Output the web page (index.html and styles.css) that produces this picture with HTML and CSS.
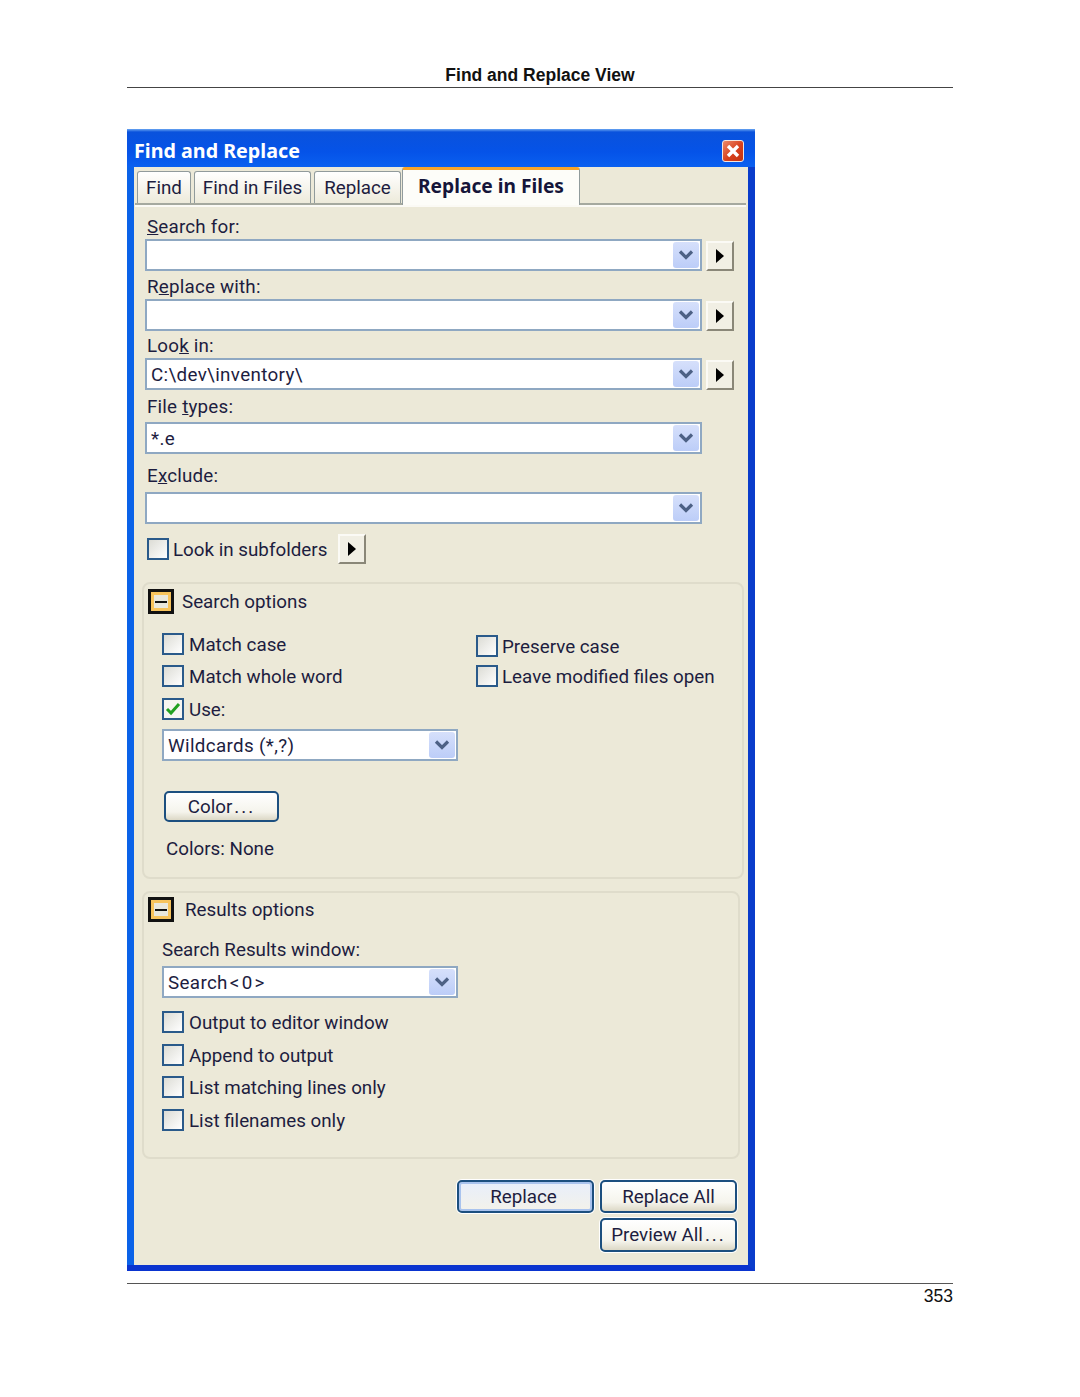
FILE: index.html
```html
<!DOCTYPE html>
<html lang="en">
<head>
    <meta charset="UTF-8">
    <title>Find and Replace View</title>
    <link rel="stylesheet" href="styles.css">
</head>
<body>
    <svg class="defs" width="0" height="0" aria-hidden="true">
        <symbol id="chev" viewBox="0 0 16 12">
            <path d="M2 2.5 L8 8.5 L14 2.5" fill="none" stroke="#4d6185" stroke-width="3.2"/>
        </symbol>
        <symbol id="tri" viewBox="0 0 8 14">
            <path d="M0 0 L8 7 L0 14 Z" fill="#000"/>
        </symbol>
        <symbol id="tick" viewBox="0 0 16 14">
            <path d="M2 7 L6 11 L14 2" fill="none" stroke="#21a121" stroke-width="3"/>
        </symbol>
    </svg>

    <div class="page">
        <header class="page-head">Find and Replace View</header>

        <div class="window">
            <div class="titlebar">
                <span class="title">Find and Replace</span>
                <span class="close">
                    <svg width="14" height="14" viewBox="0 0 14 14"><path d="M2 2 L12 12 M12 2 L2 12" stroke="#fff" stroke-width="3.4"/></svg>
                </span>
            </div>

            <div class="tabs">
                <div class="tab tab-find">Find</div>
                <div class="tab tab-files">Find in Files</div>
                <div class="tab tab-replace">Replace</div>
                <div class="tab tab-active">Replace in Files</div>
            </div>

            <div class="panel">
                <div class="fields">
                    <div class="label"><u>S</u>earch for:</div>
                    <div class="field-row">
                        <div class="combo combo-wide"><span class="combo-text"></span><span class="drop"><svg width="16" height="12"><use href="#chev"/></svg></span></div>
                        <div class="arrow"><svg width="8" height="14"><use href="#tri"/></svg></div>
                    </div>
                    <div class="label label-replace">R<u>e</u>place with:</div>
                    <div class="field-row">
                        <div class="combo combo-wide"><span class="combo-text"></span><span class="drop"><svg width="16" height="12"><use href="#chev"/></svg></span></div>
                        <div class="arrow"><svg width="8" height="14"><use href="#tri"/></svg></div>
                    </div>
                    <div class="label label-look">Loo<u>k</u> in:</div>
                    <div class="field-row">
                        <div class="combo combo-wide"><span class="combo-text">C:\dev\inventory\</span><span class="drop"><svg width="16" height="12"><use href="#chev"/></svg></span></div>
                        <div class="arrow"><svg width="8" height="14"><use href="#tri"/></svg></div>
                    </div>
                    <div class="label label-types">File <u>t</u>ypes:</div>
                    <div class="combo combo-wide"><span class="combo-text">*.e</span><span class="drop"><svg width="16" height="12"><use href="#chev"/></svg></span></div>
                    <div class="label label-exclude">E<u>x</u>clude:</div>
                    <div class="combo combo-wide"><span class="combo-text"></span><span class="drop"><svg width="16" height="12"><use href="#chev"/></svg></span></div>
                    <div class="subfolders">
                        <label class="check check-tight"><span class="box"></span>Look in subfolders</label>
                        <div class="arrow"><svg width="8" height="14"><use href="#tri"/></svg></div>
                    </div>
                </div>

                <section class="group group-search">
                    <div class="group-head"><span class="toggle"><span class="minus"></span></span><span class="group-title">Search options</span></div>
                    <div class="opts">
                        <div class="opt-col opt-left">
                            <label class="check"><span class="box"></span>Match case</label>
                            <label class="check gap-10"><span class="box"></span>Match whole word</label>
                            <label class="check gap-11"><span class="box box-on"><svg width="16" height="14"><use href="#tick"/></svg></span>Use:</label>
                        </div>
                        <div class="opt-col opt-right">
                            <label class="check check-tight"><span class="box"></span>Preserve case</label>
                            <label class="check check-tight gap-8"><span class="box"></span>Leave modified files open</label>
                        </div>
                    </div>
                    <div class="combo combo-short combo-use"><span class="combo-text">Wildcards (*,?)</span><span class="drop"><svg width="16" height="12"><use href="#chev"/></svg></span></div>
                    <div class="btn btn-color">Color<span class="dots">...</span></div>
                    <div class="colors">Colors: None</div>
                </section>

                <section class="group group-results">
                    <div class="group-head"><span class="toggle"><span class="minus"></span></span><span class="group-title title-results">Results options</span></div>
                    <div class="results-label">Search Results window:</div>
                    <div class="combo combo-short combo-results"><span class="combo-text">Search<span class="angle">&lt;</span>0<span class="angle">&gt;</span></span><span class="drop"><svg width="16" height="12"><use href="#chev"/></svg></span></div>
                    <div class="result-checks">
                        <label class="check"><span class="box"></span>Output to editor window</label>
                        <label class="check gap-11"><span class="box"></span>Append to output</label>
                        <label class="check gap-10"><span class="box"></span>List matching lines only</label>
                        <label class="check gap-11"><span class="box"></span>List filenames only</label>
                    </div>
                </section>

                <div class="actions">
                    <div class="action-row">
                        <div class="btn btn-action btn-default">Replace</div>
                        <div class="btn btn-action">Replace All</div>
                    </div>
                    <div class="action-row action-row-2">
                        <div class="btn btn-action">Preview All<span class="dots">...</span></div>
                    </div>
                </div>
            </div>
        </div>

        <footer class="page-foot">353</footer>
    </div>
</body>
</html>
```

FILE: styles.css
```css
body {
    margin: 0;
    background-color: #fff;
    font-family: Roboto, "Noto Sans", sans-serif;
    font-size: 18.8px;
    color: #1d1d3f;
}

.defs {
    position: absolute;
}

.page {
    width: 826px;
    margin-left: 127px;
}

.page-head {
    height: 24px;
    padding-top: 63px;
    line-height: 24px;
    text-align: center;
    font-family: "Liberation Sans", sans-serif;
    font-size: 17.5px;
    font-weight: bold;
    color: #111;
    border-bottom: 1px solid #444;
}

.page-foot {
    margin-top: 12px;
    padding-top: 1px;
    line-height: 22px;
    text-align: right;
    font-family: "Liberation Sans", sans-serif;
    font-size: 17.5px;
    color: #111;
    border-top: 1px solid #555;
}

/* window frame */
.window {
    width: 628px;
    height: 1142px;
    margin-top: 41px;
    box-sizing: border-box;
    display: flex;
    flex-direction: column;
    background-color: #0a62e8;
    border-right: 7px solid #0a3ccb;
    border-bottom: 6px solid #0a34cf;
}

.titlebar {
    height: 38px;
    flex: none;
    display: flex;
    align-items: center;
    justify-content: space-between;
    margin-right: -7px;
    padding: 0 11px 0 7px;
    background: linear-gradient(#6aa6f2 0, #0a52dc 3px, #0553e8 60%, #0a60f0 100%);
}

.title {
    padding-top: 4px;
    font-family: "Noto Sans", sans-serif;
    font-weight: bold;
    font-size: 19.7px;
    color: #fff;
}

.close {
    width: 22px;
    height: 22px;
    box-sizing: border-box;
    margin-top: 5px;
    display: flex;
    align-items: center;
    justify-content: center;
    background: linear-gradient(135deg, #ec8a6a, #d8401c 55%, #c23310);
    border: 1px solid #f2e6e0;
    border-radius: 3px;
}

.tabs {
    height: 38px;
    flex: none;
    display: flex;
    align-items: flex-end;
    margin-left: 7px;
    padding-left: 3px;
    background-color: #ece9d8;
}

.tab {
    height: 34px;
    box-sizing: border-box;
    line-height: 33px;
    text-align: center;
    background: linear-gradient(#fff, #ece9d8);
    border: 1px solid #919b9c;
    border-bottom: none;
    border-radius: 3px 3px 0 0;
    white-space: nowrap;
}

.tab-find { width: 54px; }
.tab-files { width: 117px; margin-left: 3px; }
.tab-replace { width: 87px; margin-left: 3px; }

.tab-active {
    width: 178px;
    height: 38px;
    margin-left: 1px;
    line-height: 31px;
    font-family: "Noto Sans", sans-serif;
    font-weight: bold;
    font-size: 19.2px;
    color: #15153a;
    background-color: #fdfdf9;
    background-image: none;
    border-top: 3px solid #f7a428;
    position: relative;
    z-index: 1;
}

.panel {
    flex: 1;
    margin-left: 7px;
    background-color: #ece9d8;
}

.panel::before {
    content: "";
    display: block;
    height: 2px;
    margin: -2px 2px 0 1px;
    background-color: #a5a99f;
    border-bottom: 2px solid #fbfaf5;
}

.fields {
    padding: 6px 0 0 11px;
}

.label {
    height: 26px;
    padding-left: 2px;
    line-height: 28px;
    letter-spacing: 0.2px;
}

.label-replace { margin-top: 2px; }
.label-look { margin-top: 1px; }
.label-types { margin-top: 3px; margin-bottom: 3px; }
.label-exclude { margin-top: 8px; margin-bottom: 4px; }

.field-row {
    display: flex;
    align-items: flex-end;
    gap: 4px;
}

.combo {
    height: 32px;
    box-sizing: border-box;
    display: flex;
    align-items: center;
    justify-content: space-between;
    background-color: #fff;
    border: 2px solid #8fa8c2;
    padding-left: 4px;
    flex: none;
}

.combo-wide { width: 557px; }
.combo-short { width: 296px; }

.combo-text {
    padding-top: 2px;
    line-height: 28px;
    letter-spacing: 0.35px;
    white-space: nowrap;
}

.angle {
    margin: 0 2px;
}

.drop {
    width: 26px;
    height: 26px;
    margin-right: 1px;
    display: flex;
    align-items: center;
    justify-content: center;
    background: linear-gradient(#d6e0fb, #bccdf8);
    border-radius: 3px;
}

.arrow {
    width: 28px;
    height: 30px;
    box-sizing: border-box;
    flex: none;
    display: flex;
    align-items: center;
    justify-content: center;
    background-color: #f1efe4;
    border: 2px solid;
    border-color: #fbfaf5 #8a8778 #8a8778 #fbfaf5;
}

.subfolders {
    width: 219px;
    height: 30px;
    margin: 10px 0 0 2px;
    display: flex;
    align-items: center;
    justify-content: space-between;
}

.check {
    height: 22px;
    display: flex;
    align-items: flex-start;
    gap: 5px;
    line-height: 24px;
    white-space: nowrap;
}

.check-tight { gap: 4px; }

.box {
    width: 22px;
    height: 22px;
    box-sizing: border-box;
    flex: none;
    display: flex;
    align-items: center;
    justify-content: center;
    background: linear-gradient(135deg, #dcdcd5, #fff);
    border: 2px solid #2a5a8a;
}

.box-on {
    background: #f6f6f1;
}

/* collapsible groups */
.group {
    box-sizing: border-box;
    margin-left: 8px;
    border: 2px solid #dfdccb;
    border-radius: 8px;
}

.group-search {
    width: 602px;
    height: 297px;
    margin-top: 18px;
}

.group-results {
    width: 598px;
    height: 268px;
    margin-top: 12px;
}

.group-head {
    display: flex;
    align-items: center;
    gap: 8px;
    margin: 5px 0 0 4px;
}

.group-results .group-head {
    margin-top: 4px;
}

.title-results {
    margin-left: 3px;
}

.toggle {
    width: 26px;
    height: 25px;
    box-sizing: border-box;
    display: flex;
    align-items: center;
    justify-content: center;
    background-color: #e9e7dc;
    border: 3px solid #111;
    box-shadow: inset 0 0 0 3px #f7c35c;
}

.minus {
    width: 12px;
    height: 2px;
    background-color: #111;
}

.opts {
    display: flex;
    margin: 19px 0 0 18px;
}

.opt-col {
    display: flex;
    flex-direction: column;
}

.opt-left { width: 314px; }
.opt-right { padding-top: 2px; }

.gap-8 { margin-top: 8px; }
.gap-10 { margin-top: 10px; }
.gap-11 { margin-top: 11px; }

.combo-use { margin: 9px 0 0 18px; }

.btn {
    box-sizing: border-box;
    display: flex;
    align-items: center;
    justify-content: center;
    background: linear-gradient(#fff, #f5f4ec 70%, #dcd8c6);
    border: 2px solid #1c4f7f;
    border-radius: 5px;
    white-space: nowrap;
}

.dots {
    margin-left: 2px;
    letter-spacing: 2px;
}

.btn-color {
    width: 115px;
    height: 31px;
    margin: 30px 0 0 20px;
}

.colors {
    height: 26px;
    line-height: 28px;
    margin: 13px 0 0 22px;
}

.results-label {
    height: 26px;
    line-height: 28px;
    margin: 14px 0 4px 18px;
}

.combo-results { margin-left: 18px; }

.result-checks {
    margin: 13px 0 0 18px;
}

.actions {
    margin-top: 21px;
    padding-right: 11px;
}

.action-row {
    display: flex;
    justify-content: flex-end;
    gap: 6px;
}

.action-row-2 { margin-top: 5px; }

.btn-action {
    width: 137px;
    height: 33px;
    box-shadow: 0 0 0 1px #fff;
}

.action-row-2 .btn-action { height: 34px; }

.btn-default {
    padding-right: 4px;
    background: linear-gradient(#e8eefb, #f3f2ea);
    box-shadow: 0 0 0 1px #fff, inset 0 0 0 2px #a9c3ee;
}
```
